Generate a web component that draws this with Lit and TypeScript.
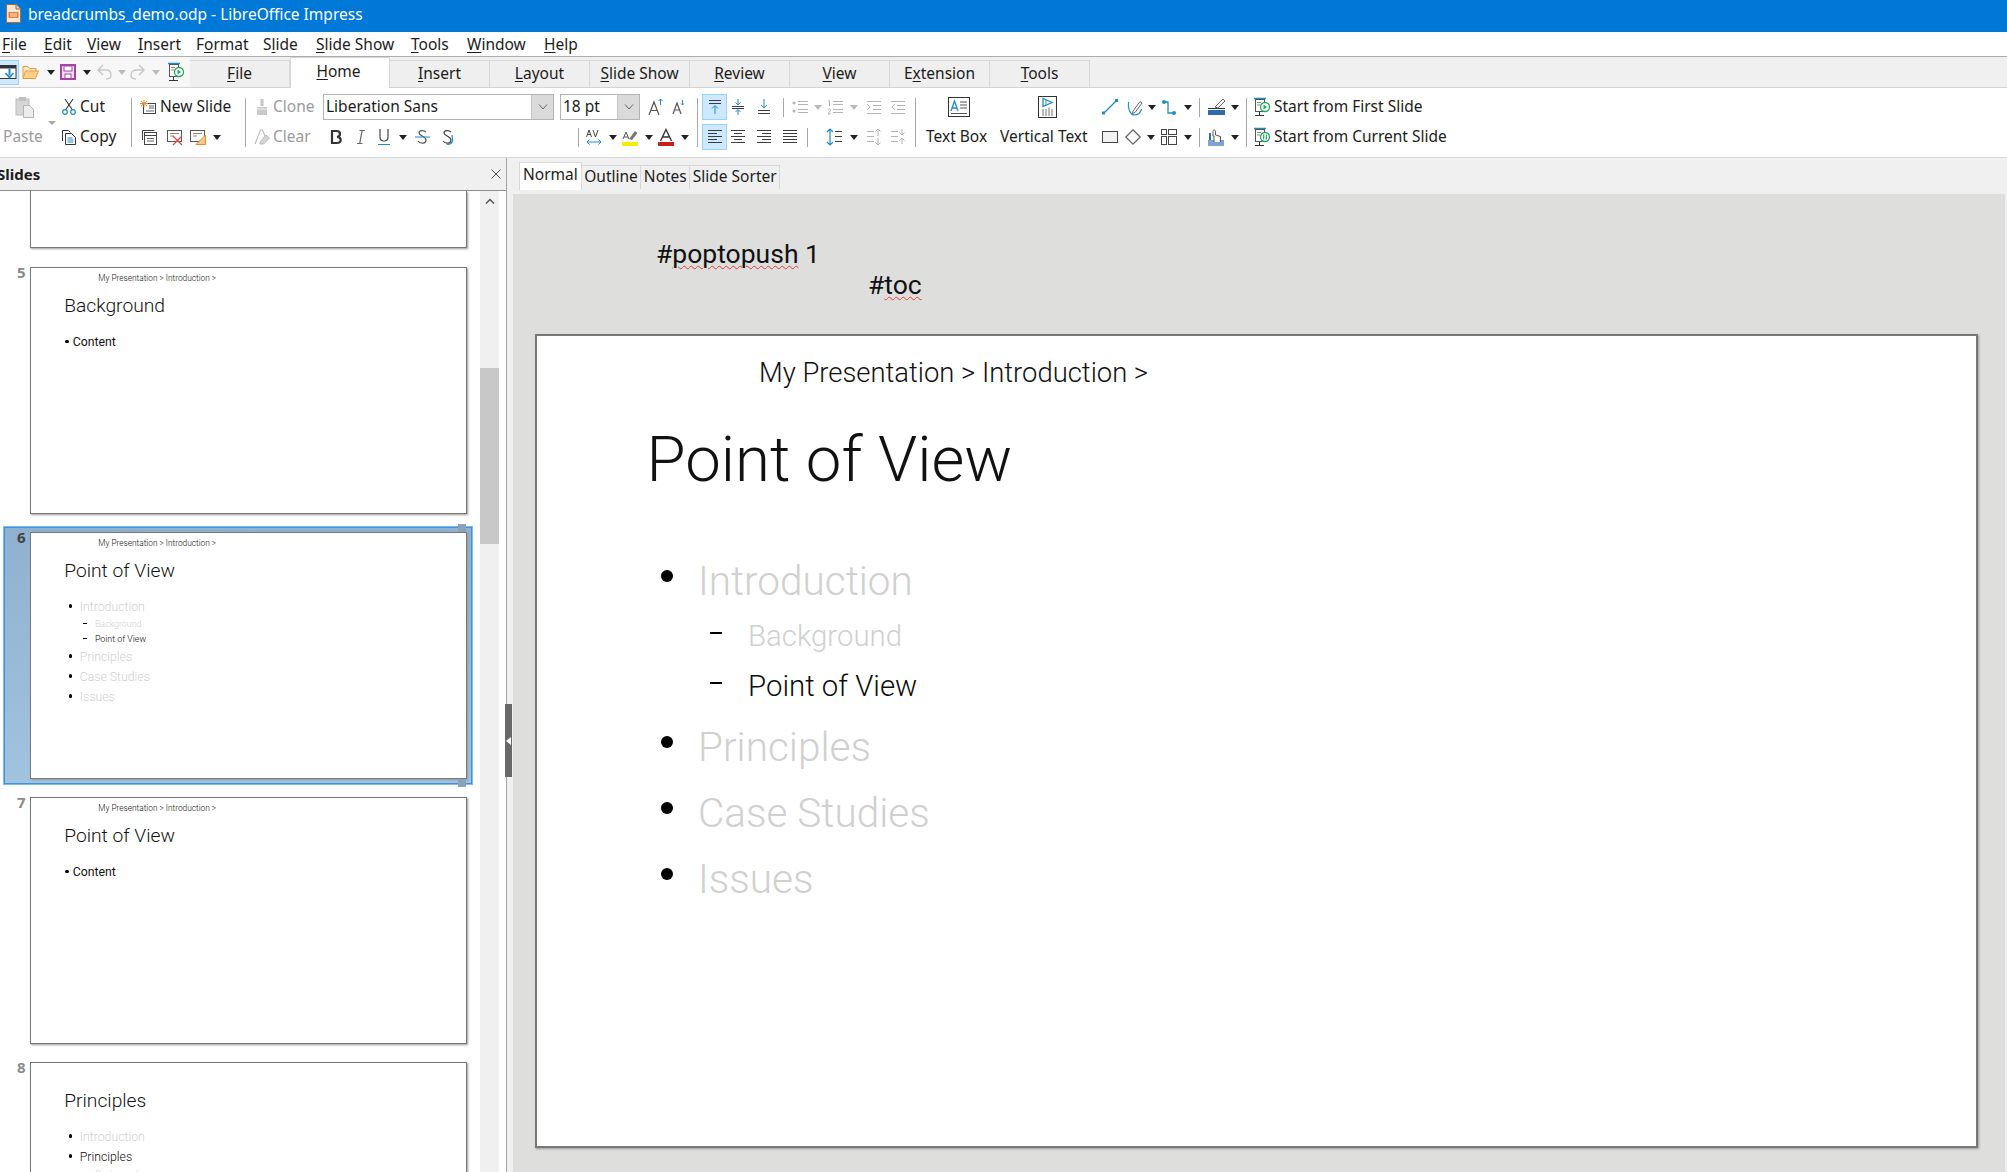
import { LitElement, html, css, svg } from 'lit';
import { customElement, property } from 'lit/decorators.js';

const ic = (w: number, h: number, body: unknown) =>
  html`<svg width="${w}" height="${h}" viewBox="0 0 ${w} ${h}" fill="none" style="overflow:visible;display:block">${body}</svg>`;

const DK = '#3c3c3c';
const BL = '#1e8bcd';
const GR = '#b4b4b4';

const drop = (c = '#222') => ic(8, 5, svg`<path d="M0 0h8l-4 5z" fill="${c}"/>`);

const lines = (ys: number[], x1: number, x2: number, c = DK) =>
  ys.map((y) => svg`<path d="M${x1} ${y}.5H${x2}" stroke="${c}"/>`);

const showIcon = (mark: unknown) =>
  ic(16, 20, svg`<path d="M0 1.500h12" stroke="${BL}" stroke-width="1.500"/><path d="M1 18.500h9M5.500 15v3" stroke="#333"/><rect x="1.500" y="2.500" width="9" height="12" fill="#fff" stroke="#555"/><path d="M3 5.500h4M3 8h3" stroke="#888"/><circle cx="11" cy="10" r="4.500" fill="#fff" stroke="#1fa85c" stroke-width="1.300"/>${mark}`);

const icons = {
  doc: ic(15, 19, svg`<path d="M.5 .5h9.500l4.500 4.500v13.500H.5z" fill="#fbe6d4" stroke="#ad6a3c"/><path d="M10 .5v4.500h4.500" fill="#f3c9a6" stroke="#ad6a3c"/><rect x="2.500" y="8" width="10" height="6" fill="#e8813f"/><path d="M4 10h7M4 12h7" stroke="#fde3cd"/>`),
  view: ic(18, 14, svg`<rect x="-4" y=".5" width="20" height="13" fill="#fff" stroke="#333"/><path d="M-4 .5h20v3h-20z" fill="#333"/><path d="M9.500 3.500v7" stroke="${BL}" stroke-width="2"/><path d="M5.500 8l4 4.500 4-4.500" stroke="${BL}" stroke-width="1.600"/>`),
  open: ic(17, 14, svg`<path d="M1 13V1.500h5l1.500 2H14V6" fill="#fde6c2" stroke="#ea9b3f"/><path d="M1 13.500 3.500 6h13l-3 7.500z" fill="#fcd08c" stroke="#ea9b3f"/>`),
  save: ic(16, 16, svg`<rect x="1" y="1" width="14" height="14" fill="#f2dff2" stroke="#a543a5" stroke-width="2"/><rect x="4" y="2" width="8" height="5" fill="#fff" stroke="#a543a5"/><rect x="5" y="10" width="6" height="4.500" fill="#fff" stroke="#a543a5"/>`),
  undo: ic(15, 16, svg`<path d="M6 1 1 6l5 5M1 6h8c3 0 5 2 5 5s-2 4-5 4" stroke="#c6c6c6" stroke-width="1.300"/>`),
  redo: ic(15, 16, svg`<path d="M9 1l5 5-5 5M14 6H6c-3 0-5 2-5 5s2 4 5 4" stroke="#c6c6c6" stroke-width="1.300"/>`),
  showQ: showIcon(svg`<path d="M9.500 7.500 13 10l-3.500 2.500z" fill="#1fa85c"/>`),

  paste: ic(20, 22, svg`<rect x="1" y="3" width="13" height="16" fill="#d6d6d6" stroke="#bcbcbc"/><rect x="4" y="1" width="7" height="4" fill="#c0c0c0"/><path d="M8.500 9.500h6l4 4v8h-10z" fill="#ececec" stroke="#b4b4b4"/><path d="M33 25h8l-4 4z" fill="#a8a8a8"/>`),
  cut: ic(14, 16, svg`<path d="M3 0 10.500 11M11 0 3.500 11" stroke="#333" stroke-width="1.100"/><circle cx="3" cy="13" r="2.300" stroke="${BL}" stroke-width="1.200"/><circle cx="11" cy="13" r="2.300" stroke="${BL}" stroke-width="1.200"/>`),
  copy: ic(14, 15, svg`<path d="M.5 11V.5h6l2 2" stroke="#333"/><path d="M3.500 3.500h6l4 4v7h-10z" fill="#fff" stroke="#333"/><path d="M5.500 8h5M5.500 10h6M5.500 12h6" stroke="${BL}"/>`),
  newSlide: ic(16, 14, svg`<rect x="3.500" y="3.500" width="12" height="10" fill="#fff" stroke="#444"/><path d="M9 6h5M9 8h5M6 11h8" stroke="#666"/><path d="M4 0v7M0 3.500h8M1 1l6 5M7 1 1 6" stroke="#ef8a2b"/>`),
  dupSlide: ic(15, 15, svg`<path d="M.5 10V.5h12" stroke="#444"/><rect x="2.500" y="2.500" width="12" height="12" fill="#fff" stroke="#444"/><path d="M2.500 5.500h12" stroke="#444"/><path d="M5 8.500h7M5 11h7" stroke="#666"/>`),
  delSlide: ic(16, 15, svg`<rect x=".5" y=".5" width="14" height="11" fill="#fff" stroke="#555"/><path d="M3 3.500h9M3 6h4" stroke="#888"/><path d="M6 6l9 9M15 6l-9 9" stroke="#e0483c" stroke-width="1.300"/>`),
  layoutSlide: ic(16, 15, svg`<rect x=".5" y=".5" width="14" height="11" fill="#fff" stroke="#555"/><path d="M3 3.500h9M3 6h4" stroke="#888"/><path d="M15.500 5v9.500H6z" fill="#f7c98a" stroke="#e8892c"/>`),

  clone: ic(12, 18, svg`<rect x="4.500" y="1" width="3" height="7" fill="#c6c6c6"/><path d="M1 9h10v8H1z" fill="#c9c9c9"/><path d="M1 11h10" stroke="#eee"/>`),
  clear: ic(16, 16, svg`<path d="M1 15 6.500 1h2L13 12" stroke="#bcbcbc" stroke-width="1.100"/><path d="M6 13l6-7 3.500 3-6 6H6z" fill="#d4d4d4" stroke="#bcbcbc"/>`),
  grow: ic(16, 18, svg`<path d="M1 17 6 4l5 13M3 12.500h6" stroke="#555" stroke-width="1.200"/><path d="M12.500 7V1M10.500 3l2-2 2 2" stroke="${BL}"/>`),
  shrink: ic(12, 16, svg`<path d="M0 15 4 4l4 11M1.500 11h5" stroke="#555" stroke-width="1.200"/><path d="M9.500 1v5M8 4.500l1.500 1.500L11 4.500" stroke="${BL}"/>`),
  bold: ic(12, 14, svg`<path d="M2 1h4.500c2.500 0 3.500 1.200 3.500 3s-1.200 2.700-3 3c2.300 0 3.700 1 3.700 3s-1.500 3-4 3H2z" stroke="#333" stroke-width="2.200"/>`),
  italic: ic(8, 14, svg`<path d="M2.500 .5h5.500M0 13.500h5.500M5 1 2.800 13" stroke="#666" stroke-width="1.200"/>`),
  under: ic(12, 16, svg`<path d="M2 0v8c0 3 1.500 4 4 4s4-1 4-4V0" stroke="#444" stroke-width="1.200"/><path d="M0 15.500h12" stroke="${BL}"/>`),
  strike: ic(15, 14, svg`<path d="M11 2C9 0 4 0 4 3c0 3 7 3 7 7 0 4-6 4-8 1" stroke="#555" stroke-width="1.200"/><path d="M0 7h15" stroke="${BL}"/>`),
  shadow: ic(11, 15, svg`<path d="M9 2C7 0 2 0 2 3c0 3 7 3 7 7 0 4-6 4-8 1" stroke="#444" stroke-width="1.200"/><path d="M10 5c0 2 1 4 .5 6-.5 2-3 4-6 3" stroke="${BL}" stroke-width="1.200"/>`),
  kern: ic(16, 16, svg`<path d="M.5 8 3 1l2.500 7M1.500 5.500h3M7 1l2.500 7L12 1" stroke="#444"/><path d="M1 13h14M3.500 10.500 1 13l2.500 2.500M12.500 10.500 15 13l-2.500 2.500" stroke="${BL}"/>`),
  hilite: ic(16, 17, svg`<path d="M1 10 4 3l3 7M2 8h4" stroke="#555"/><path d="M7 10l6-8 2.500 2-5.500 7z" fill="#777"/><rect y="13" width="16" height="4" fill="#f5ee00"/>`),
  color: ic(16, 17, svg`<path d="M2.500 12 8 .5 13.500 12M4.500 8h7" stroke="#333" stroke-width="1.400"/><rect y="13" width="16" height="4" fill="#c81e1e"/>`),

  alignT: ic(16, 16, svg`<path d="M2 1.500h12M2 4.500h12" stroke="${DK}"/><path d="M8 15V7M5 9.500 8 6.500l3 3" stroke="${BL}"/>`),
  alignM: ic(16, 16, svg`<path d="M2 7.500h12M2 9.500h12" stroke="${DK}"/><path d="M8 0v6M5.500 3.500 8 6l2.500-2.500M8 16v-5M5.500 13 8 10.500l2.500 2.500" stroke="${BL}"/>`),
  alignB: ic(16, 16, svg`<path d="M2 11.500h12M2 14.500h12" stroke="${DK}"/><path d="M8 0v8M5 6l3 3 3-3" stroke="${BL}"/>`),
  left: ic(16, 16, svg`${[1, 4, 7, 10, 13].map((y, i) => svg`<path d="M1 ${y}.5H${i % 2 ? 10 : 15}" stroke="${DK}"/>`)}`),
  center: ic(16, 16, svg`${[1, 4, 7, 10, 13].map((y, i) => svg`<path d="M${i % 2 ? 4 : 1} ${y}.5H${i % 2 ? 12 : 15}" stroke="${DK}"/>`)}`),
  right: ic(16, 16, svg`${[1, 4, 7, 10, 13].map((y, i) => svg`<path d="M${i % 2 ? 6 : 1} ${y}.5H15" stroke="${DK}"/>`)}`),
  justify: ic(16, 16, svg`${lines([1, 4, 7, 10, 13], 1, 15)}`),
  bullets: ic(16, 15, svg`<circle cx="2" cy="3" r="1.500" fill="${GR}"/><circle cx="2" cy="11" r="1.500" fill="${GR}"/>${lines([1, 4, 9, 12], 6, 16, GR)}`),
  numbers: ic(16, 15, svg`<path d="M1 1.500 2.500 .5V6M1 9.500c1-1 3-.5 2.500 1L1 14h3" stroke="${GR}"/>${lines([1, 4, 9, 12], 6, 16, GR)}`),
  indent: ic(16, 15, svg`${lines([1, 13], 1, 15, GR)}${lines([5, 9], 7, 15, GR)}<path d="M1 4l3 3-3 3" stroke="${GR}"/>`),
  outdent: ic(16, 15, svg`${lines([1, 13], 1, 15, GR)}${lines([5, 9], 7, 15, GR)}<path d="M5 4 2 7l3 3" stroke="${GR}"/>`),
  spacing: ic(16, 18, svg`<path d="M4 1v16M1 4l3-3 3 3M1 14l3 3 3-3" stroke="${BL}" stroke-width="1.200"/>${lines([3, 8, 13], 9, 16)}`),
  paraUp: ic(16, 16, svg`${lines([2, 7, 12], 1, 8, GR)}<path d="M12 0v7M9.500 2.500 12 0l2.500 2.500M12 16V9M9.500 13.500 12 16l2.500-2.500" stroke="${GR}"/>`),
  paraDn: ic(16, 16, svg`${lines([2, 7, 12], 1, 8, GR)}<path d="M12 0v6M9.500 3.500 12 6l2.500-2.500M12 15V9M9.500 11.500 12 9l2.500 2.500" stroke="${GR}"/>`),

  textBox: ic(22, 20, svg`<rect x=".5" y=".5" width="21" height="19" fill="#fff" stroke="#333"/><path d="M3 14 6.500 4 10 14M4.200 11h4.600" stroke="${BL}" stroke-width="1.300"/><path d="M12 5h7M12 8h7M12 11h7M3 16.500h16" stroke="#555"/>`),
  vertText: ic(19, 22, svg`<rect x=".5" y=".5" width="18" height="21" fill="#fff" stroke="#333"/><path d="M5 2.500v8l9-4z" stroke="${BL}" stroke-width="1.300"/><path d="M8 4v5" stroke="${BL}"/><path d="M5 13v7M8 13v7M11 11.500v8.500M14 13v7" stroke="#777"/>`),
  line: ic(16, 16, svg`<path d="M2 14 14 2" stroke="${BL}" stroke-width="1.300"/><rect y="12.500" width="3" height="3" fill="${BL}"/><rect x="13" width="3" height="3" fill="${BL}"/>`),
  curve: ic(16, 17, svg`<path d="M1.500 3c-1 7 2 13 6 13s6-2 7-6" stroke="${BL}" stroke-width="1.200"/><path d="M6 12 13 2.500l2 1.500-7 9.500-2.500 1z" fill="#fff" stroke="#666"/>`),
  connector: ic(14, 15, svg`<path d="M2 2h4v11h6" stroke="${BL}" stroke-width="1.300"/><circle cx="2" cy="2" r="2" fill="${BL}"/><circle cx="12" cy="13" r="2" fill="${BL}"/>`),
  lineCol: ic(17, 16, svg`<rect y="11" width="17" height="5" fill="#2d6ea8"/><path d="M0 9.500h17" stroke="#333"/><path d="M7 8l8-8 2 2-7 7z" fill="#fff" stroke="#666"/>`),
  rect: ic(16, 12, svg`<rect x=".5" y=".5" width="15" height="11" fill="#f2f2f2" stroke="#444"/>`),
  diamond: ic(16, 16, svg`<path d="M8 .8 15.200 8 8 15.200.8 8z" fill="#fff" stroke="#666" stroke-width="1.300"/>`),
  layout: ic(16, 16, svg`<rect x=".5" y=".5" width="5" height="5" stroke="#444"/><rect x="7.500" y=".5" width="8" height="5" stroke="#444"/><rect x=".5" y="7.500" width="5" height="8" stroke="#444"/><rect x="7.500" y="7.500" width="8" height="8" stroke="#444"/>`),
  fill: ic(16, 17, svg`<rect y="11" width="16" height="6" fill="#7ba3d4"/><path d="M1 11V4h2v7" fill="#2d6ea8"/><path d="M6 13V7H5V2.500c0-2 2.500-2 2.500 0V6l5 1.500V13" fill="#fff" stroke="#555"/>`),
  showFirst: showIcon(svg`<path d="M9.500 7.500 13 10l-3.500 2.500z" fill="#1fa85c"/>`),
  showCur: showIcon(svg`<path d="M9.700 7.500v5M12.300 7.500v5" stroke="#1fa85c" stroke-width="1.200"/>`),
};

const at = (gap: number, item: unknown) => html`<span class="tool" style="margin-left:${gap}px">${item}</span>`;
const label = (gap: number, width: number, text: string, dim = false) =>
  html`<span class="lab ${dim ? 'dim' : ''}" style="margin-left:${gap}px;width:${width}px">${text}</span>`;
const miniSep = (gap: number) => html`<span class="mini" style="margin-left:${gap}px"></span>`;
const toggled = (gap: number, item: unknown) => html`<span class="toggle" style="margin-left:${gap}px">${item}</span>`;

const chevron = html`<span class="combo-btn">${ic(10, 6, svg`<path d="M1 .5 5 5l4-4.500" stroke="#666"/>`)}</span>`;

// last number is the slot width of the menu entry
const menus: [string, string, string, number][] = [
  ['', 'F', 'ile', 42], ['', 'E', 'dit', 43], ['', 'V', 'iew', 51], ['', 'I', 'nsert', 58], ['F', 'o', 'rmat', 67], ['S', 'l', 'ide', 53],
  ['', 'S', 'lide Show', 95], ['', 'T', 'ools', 56], ['', 'W', 'indow', 77], ['', 'H', 'elp', 40],
];
const tabs: [string, string, string][] = [
  ['', 'F', 'ile'], ['', 'H', 'ome'], ['', 'I', 'nsert'], ['', 'L', 'ayout'], ['', 'S', 'lide Show'],
  ['', 'R', 'eview'], ['', 'V', 'iew'], ['E', 'x', 'tension'], ['', 'T', 'ools'],
];

interface Item { t: string; lvl?: number; on?: boolean; plain?: boolean }

@customElement('slide-view')
class SlideView extends LitElement {
  static styles = css`
    :host {
      display: block;
      box-sizing: border-box;
      width: calc(var(--u) * 1443);
      height: calc(var(--u) * 814);
      background: #fff;
      border: var(--edge, 2px) solid #787878;
      box-shadow: 1px 1px 2px #9a9a9a;
      overflow: hidden;
      font-family: Roboto, 'Noto Sans', sans-serif;
      font-weight: 300;
      color: #111;
    }
    .crumb {
      height: calc(var(--u) * 52);
      margin-top: calc(var(--u) * 11);
      padding-left: calc(var(--u) * 222);
      font-size: calc(var(--u) * 27.4);
      line-height: calc(var(--u) * 52);
      white-space: nowrap;
    }
    h1 {
      margin: calc(var(--u) * 16) 0 calc(var(--u) * 46) calc(var(--u) * 109.5);
      font-size: calc(var(--u) * 63.5);
      line-height: calc(var(--u) * 90);
      font-weight: 300;
      white-space: nowrap;
    }
    .li {
      display: flex;
      align-items: center;
      margin-top: calc(var(--u) * 6);
      height: calc(var(--u) * 60);
      padding-left: calc(var(--u) * 124);
      font-size: calc(var(--u) * 40.5);
      color: #d0d0d0;
      white-space: nowrap;
    }
    .li:first-of-type { margin-top: 0; }
    .li .dot {
      flex: none;
      width: calc(var(--u) * 12);
      height: calc(var(--u) * 12);
      margin-right: calc(var(--u) * 25);
      margin-bottom: calc(var(--u) * 10);
      border-radius: 50%;
      background: #000;
    }
    .li.sub {
      margin-top: 0;
      height: calc(var(--u) * 50);
      padding-left: calc(var(--u) * 173);
      font-size: calc(var(--u) * 29.4);
    }
    .li.sub .dot {
      width: calc(var(--u) * 12);
      height: calc(var(--u) * 2.5);
      margin-right: calc(var(--u) * 26);
      margin-bottom: calc(var(--u) * 6);
      border-radius: 0;
    }
    .li.plain {
      padding-left: calc(var(--u) * 112);
      color: #111;
      font-weight: 400;
    }
    .li.plain .dot { margin-right: calc(var(--u) * 14); margin-bottom: calc(var(--u) * 4); }
    .li.on { color: #0c0c0c; }
  `;

  @property() heading = '';
  @property({ type: Boolean }) crumb = false;
  @property({ attribute: false }) items: Item[] = [];

  render() {
    return html`
      <div class="crumb">${this.crumb ? 'My Presentation > Introduction >' : ''}</div>
      <h1>${this.heading}</h1>
      ${this.items.map(
        (i) => html`<div class="li ${i.lvl ? 'sub' : ''} ${i.on ? 'on' : ''} ${i.plain ? 'plain' : ''}"><span class="dot"></span>${i.t}</div>`
      )}
    `;
  }
}

const outline: Item[] = [
  { t: 'Introduction' }, { t: 'Background', lvl: 1 }, { t: 'Point of View', lvl: 1, on: true },
  { t: 'Principles' }, { t: 'Case Studies' }, { t: 'Issues' },
];
const content: Item[] = [{ t: 'Content', plain: true }];
const thumbs = [
  { n: 5, heading: 'Background', crumb: true, items: content },
  { n: 6, heading: 'Point of View', crumb: true, items: outline, sel: true },
  { n: 7, heading: 'Point of View', crumb: true, items: content },
  { n: 8, heading: 'Principles', crumb: false, items: [
    { t: 'Introduction' }, { t: 'Principles', on: true }, { t: 'Customer focus', lvl: 1 }, { t: 'Case Studies' }, { t: 'Issues' },
  ] },
];

@customElement('app-root')
export class AppRoot extends LitElement {
  static styles = css`
    :host {
      display: flex;
      flex-direction: column;
      width: 2007px;
      height: 1172px;
      overflow: hidden;
      position: relative;
      background: #f0f0f0;
      font-family: 'Noto Sans', sans-serif;
      font-size: 15.5px;
      color: #1c1c1c;
    }
    u { text-underline-offset: 2px; text-decoration-thickness: 1px; }

    .titlebar { flex: none; box-sizing: border-box; display: flex; align-items: center; height: 32px; padding: 0 0 5px 6px; background: #0078d7; color: #fff; }
    .titlebar span { margin-left: 7px; }

    .menubar { flex: none; display: flex; align-items: center; height: 24px; padding-left: 2px; background: #fff; border-bottom: 1px solid #adadad; }

    .tabrow { flex: none; display: flex; height: 30px; background: #f0f0f0; border-bottom: 1px solid #d4d4d4; }
    .quick { flex: none; width: 190px; height: 30px; display: flex; align-items: center; background: #f7f7f7; }
    .quick .first { display: flex; align-items: center; justify-content: center; width: 19px; height: 25px; background: #cde8ff; border: 1px solid #99d1ff; border-left: 0; box-sizing: border-box; }
    .tab { flex: none; box-sizing: border-box; width: 100px; height: 27px; margin-top: 3px; padding-bottom: 2px; display: flex; align-items: center; justify-content: center; background: #efefef; border-top: 1px solid #d8d8d8; border-right: 1px solid #d8d8d8; }
    .tab.on { height: 31px; margin-top: 0; padding: 0 3px 4px 0; background: #fff; border-left: 1px solid #d8d8d8; }

    .ribbon { flex: none; display: flex; height: 70px; box-sizing: border-box; background: #fff; border-bottom: 1px solid #d6d6d6; }
    .group { flex: none; padding-top: 4px; }
    .row { display: flex; align-items: center; height: 30px; }
    .sep { flex: none; width: 1px; height: 49px; margin-top: 10px; background: #a8a8a8; }
    .tool { flex: none; display: block; }
    .lab { flex: none; display: block; margin-bottom: 2px; white-space: nowrap; }
    .dim { color: #9b9b9b; }
    .mini { flex: none; width: 1px; height: 19px; background: #a8a8a8; }
    .toggle { flex: none; display: flex; align-items: center; justify-content: center; box-sizing: border-box; width: 25px; height: 26px; background: #cde8ff; border: 1px solid #99d1ff; }

    .combo { flex: none; display: flex; box-sizing: border-box; height: 26px; border: 1.5px solid #b4b4b4; line-height: 22px; background: #fff; }
    .combo b { flex: 1; font-weight: 400; padding-left: 2px; white-space: nowrap; }
    .combo-btn { flex: none; width: 21px; display: flex; align-items: center; justify-content: center; background: #dadada; border-left: 1px solid #c4c4c4; }
    .font { width: 231px; margin-left: 9px; }
    .size { width: 80px; margin-left: 6px; }

    .main { flex: 1; display: flex; min-height: 0; position: relative; }
    .panel { flex: none; width: 506px; display: flex; flex-direction: column; background: #fff; border-right: 1px solid #a4a4a4; }
    .panel-head { flex: none; display: flex; align-items: center; justify-content: space-between; height: 32px; background: #f0f0f0; border-bottom: 1px solid #8e8e8e; padding-right: 5px; }
    .panel-head strong { margin-left: -3px; font-weight: 700; font-size: 15px; }
    .panel-body { flex: 1; display: flex; min-height: 0; }
    .list { flex: none; width: 480px; overflow: hidden; --u: 0.303px; --edge: 1px; }
    .stub { box-sizing: border-box; width: 437px; height: 57px; margin: 0 0 13px 30px; border: 1px solid #787878; border-top: 0; box-shadow: 1px 1px 2px #9a9a9a; }
    .thumb { position: relative; box-sizing: border-box; width: 470px; height: 259px; margin: 0 0 6px 3px; padding: 6px 0 0 27px; }
    .thumb .num { position: absolute; left: 14px; top: 1px; font-size: 15px; font-weight: 700; color: #8a8a8a; }
    .thumb.sel { background: linear-gradient(#8fb1cf, #a2c3df); border: 1px solid #79bcf0; box-shadow: inset 0 0 0 1px #3d94dc; padding: 5px 0 0 26px; }
    .thumb.sel .num { left: 13px; top: 0; color: #444; }
    .grip { position: absolute; left: 454px; width: 8px; height: 8px; background: #8ba3ba; }
    .grip.top { top: -3px; }
    .grip.bot { bottom: -3px; }
    .track { flex: none; width: 19px; background: #f0f0f0; display: flex; flex-direction: column; align-items: center; padding-top: 7px; }
    .thumbbar { width: 19px; height: 176px; margin-top: 164px; background: #c8c8c8; }

    .handle { position: absolute; left: 505px; top: 546px; width: 7px; height: 73px; background: #696969; display: flex; align-items: center; justify-content: center; }

    .work { flex: 1; display: flex; flex-direction: column; min-width: 0; }
    .modes { flex: none; display: flex; height: 36px; padding: 4px 0 0 12px; box-sizing: border-box; }
    .mode { box-sizing: border-box; height: 24px; margin-top: 3px; padding: 0 2.5px; line-height: 20px; border: 1px solid #d8d8d8; border-left: 0; border-bottom: 0; white-space: nowrap; }
    .mode.on { height: 28px; margin-top: 0; padding: 0 3px; background: #fff; border-left: 1px solid #d8d8d8; line-height: 23px; }

    .canvas { flex: 1; min-height: 0; margin: 0 2px 0 6px; padding-top: 44px; background: #dededc; }
    .note { height: 31px; line-height: 31px; font-size: 26.5px; font-family: Roboto, 'Noto Sans', sans-serif; color: #111; white-space: nowrap; }
    .note.a { margin-left: 143px; }
    .note.b { margin-left: 355px; }
    .sp { text-decoration: underline wavy #e0403c 1px; text-underline-offset: 2px; }
    .stage { --u: 1px; --edge: 2px; margin: 34px 0 0 22px; }
  `;

  private word(t: [string, string, string, number?]) {
    return html`${t[0]}<u>${t[1]}</u>${t[2]}`;
  }

  render() {
    const i = icons;
    return html`
      <div class="titlebar">${i.doc}<span>breadcrumbs_demo.odp - LibreOffice Impress</span></div>
      <div class="menubar">${menus.map((m) => html`<span style="width:${m[3]}px">${this.word(m)}</span>`)}</div>
      <div class="tabrow">
        <div class="quick">
          <span class="first">${i.view}</span>
          ${at(3, i.open)}${at(8, drop())}${at(5, i.save)}${at(7, drop())}${at(6, i.undo)}${at(6, drop('#bbb'))}${at(4, i.redo)}${at(7, drop('#bbb'))}${at(8, i.showQ)}
        </div>
        ${tabs.map((t, n) => html`<div class="tab ${n === 1 ? 'on' : ''}"><span>${this.word(t)}</span></div>`)}
      </div>

      <div class="ribbon">
        <div class="group" style="width:131px">
          <div class="row">${at(15, i.paste)}${at(27, i.cut)}${label(4, 30, 'Cut')}</div>
          <div class="row">${label(3, 37, 'Paste', true)}${at(22, i.copy)}${label(4, 40, 'Copy')}</div>
        </div>
        <div class="sep"></div>
        <div class="group" style="width:113px">
          <div class="row">${at(8, i.newSlide)}${label(4, 75, 'New Slide')}</div>
          <div class="row">${at(10, i.dupSlide)}${at(10, i.delSlide)}${at(7, i.layoutSlide)}${at(7, drop())}</div>
        </div>
        <div class="sep"></div>
        <div class="group" style="width:451px">
          <div class="row">
            ${at(10, i.clone)}${label(5, 41, 'Clone', true)}
            <div class="combo font"><b>Liberation Sans</b>${chevron}</div>
            <div class="combo size"><b>18 pt</b>${chevron}</div>
            ${at(8, i.grow)}${at(9, i.shrink)}
          </div>
          <div class="row">
            ${at(8, i.clear)}${label(3, 37, 'Clear', true)}
            ${at(20, i.bold)}${at(15, i.italic)}${at(13, i.under)}${at(9, drop())}${at(8, i.strike)}${at(12, i.shadow)}
            ${miniSep(125)}${at(7, i.kern)}${at(7, drop())}${at(5, i.hilite)}${at(7, drop())}${at(5, i.color)}${at(7, drop())}
          </div>
        </div>
        <div class="sep"></div>
        <div class="group" style="width:217px">
          <div class="row">
            ${toggled(4, i.alignT)}${at(3, i.alignM)}${at(10, i.alignB)}${miniSep(11)}
            ${at(8, i.bullets)}${at(6, drop('#bbb'))}${at(5, i.numbers)}${at(7, drop('#bbb'))}${at(8, i.indent)}${at(8, i.outdent)}
          </div>
          <div class="row">
            ${toggled(4, i.left)}${at(3, i.center)}${at(10, i.right)}${at(10, i.justify)}${miniSep(9)}
            ${at(18, i.spacing)}${at(8, drop())}${at(8, i.paraUp)}${at(8, i.paraDn)}
          </div>
        </div>
        <div class="sep"></div>
        <div class="group" style="width:330px">
          <div class="row">
            ${at(32, i.textBox)}${at(68, i.vertText)}${at(45, i.line)}${at(9, i.curve)}${at(5, drop())}${at(6, i.connector)}${at(8, drop())}${miniSep(7)}${at(8, i.lineCol)}${at(6, drop())}
          </div>
          <div class="row">
            ${label(10, 63, 'Text Box')}${label(11, 90, 'Vertical Text')}${at(12, i.rect)}${at(7, i.diamond)}${at(6, drop())}${at(6, i.layout)}${at(7, drop())}${miniSep(7)}${at(8, i.fill)}${at(7, drop())}
          </div>
        </div>
        <div class="sep"></div>
        <div class="group">
          <div class="row">${at(7, i.showFirst)}${label(4, 160, 'Start from First Slide')}</div>
          <div class="row">${at(7, i.showCur)}${label(4, 180, 'Start from Current Slide')}</div>
        </div>
      </div>

      <div class="main">
        <div class="panel">
          <div class="panel-head">
            <strong>Slides</strong>
            ${ic(10, 10, svg`<path d="M.5 .5l9 9M9.500 .5l-9 9" stroke="#555"/>`)}
          </div>
          <div class="panel-body">
            <div class="list">
              <div class="stub"></div>
              ${thumbs.map(
                (t) => html`
                  <div class="thumb ${t.sel ? 'sel' : ''}">
                    <span class="num">${t.n}</span>
                    <slide-view .heading=${t.heading} ?crumb=${t.crumb} .items=${t.items}></slide-view>
                    ${t.sel ? html`<i class="grip top"></i><i class="grip bot"></i>` : ''}
                  </div>
                `
              )}
            </div>
            <div class="track">
              ${ic(10, 6, svg`<path d="M1 5.500 5 1.500l4 4" stroke="#555" stroke-width="1.500"/>`)}
              <div class="thumbbar"></div>
            </div>
          </div>
        </div>
        <div class="handle">${ic(5, 8, svg`<path d="M5 0v8L0 4z" fill="#fff"/>`)}</div>

        <div class="work">
          <div class="modes">
            <div class="mode on">Normal</div>
            <div class="mode">Outline</div>
            <div class="mode">Notes</div>
            <div class="mode">Slide Sorter</div>
          </div>
          <div class="canvas">
            <div class="note a">#<span class="sp">poptopush</span> 1</div>
            <div class="note b">#<span class="sp">toc</span></div>
            <slide-view class="stage" heading="Point of View" crumb .items=${outline}></slide-view>
          </div>
        </div>
      </div>
    `;
  }
}
